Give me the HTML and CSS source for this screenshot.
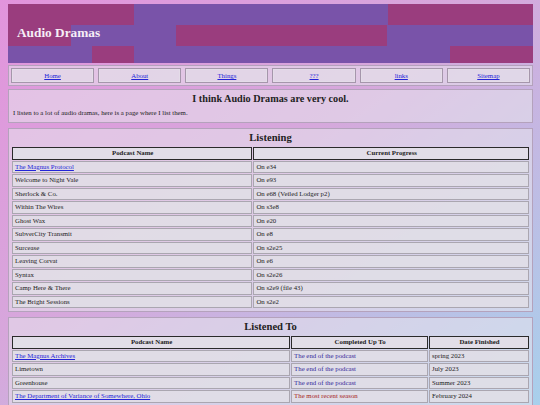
FILE: index.html
```html
<!DOCTYPE html>
<html lang="en">
  <head>
    <meta charset="UTF-8" />
    <meta name="viewport" content="width=device-width, initial-scale=1.0" />
    <title>Audio Dramas</title>
    <link rel="stylesheet" href="styles.css">
  </head>
  <body>
    <header class="banner">
      <h1>Audio Dramas</h1>
    </header>

    <nav class="nav panel">
      <a href="#">Home</a>
      <a href="#">About</a>
      <a href="#">Things</a>
      <a href="#">???</a>
      <a href="#">links</a>
      <a href="#">Sitemap</a>
    </nav>

    <section class="panel intro">
      <h2>I think Audio Dramas are very cool.</h2>
      <p>I listen to a lot of audio dramas, here is a page where I list them.</p>
    </section>

    <section class="panel list">
      <h3>Listening</h3>
      <table class="listening">
        <tr><th class="col-name">Podcast Name</th><th>Current Progress</th></tr>
        <tr><td><a href="#">The Magnus Protocol</a></td><td>On e34</td></tr>
        <tr><td>Welcome to Night Vale</td><td>On e93</td></tr>
        <tr><td>Sherlock &amp; Co.</td><td>On e68 (Veiled Lodger p2)</td></tr>
        <tr><td>Within The Wires</td><td>On s3e8</td></tr>
        <tr><td>Ghost Wax</td><td>On e20</td></tr>
        <tr><td>SubverCity Transmit</td><td>On e8</td></tr>
        <tr><td>Surcease</td><td>On s2e25</td></tr>
        <tr><td>Leaving Corvat</td><td>On e6</td></tr>
        <tr><td>Syntax</td><td>On s2e26</td></tr>
        <tr><td>Camp Here &amp; There</td><td>On s2e9 (file 43)</td></tr>
        <tr><td>The Bright Sessions</td><td>On s2e2</td></tr>
      </table>
    </section>

    <section class="panel list">
      <h3>Listened To</h3>
      <table class="listened">
        <tr><th class="col-name">Podcast Name</th><th class="col-done">Completed Up To</th><th>Date Finished</th></tr>
        <tr><td><a href="#">The Magnus Archives</a></td><td class="done">The end of the podcast</td><td>spring 2023</td></tr>
        <tr><td>Limetown</td><td class="done">The end of the podcast</td><td>July 2023</td></tr>
        <tr><td>Greenhouse</td><td class="done">The end of the podcast</td><td>Summer 2023</td></tr>
        <tr><td><a href="#">The Department of Variance of Somewhere, Ohio</a></td><td class="recent">The most recent season</td><td>February 2024</td></tr>
      </table>
    </section>
  </body>
</html>
```
FILE: styles.css
```css
* {
  box-sizing: border-box;
}

html {
  min-height: 100%;
}

body {
  margin: 4px 7px 0 8px;
  font-family: "Liberation Serif", "Times New Roman", serif;
  font-size: 6.8px;
  color: #222;
  background: linear-gradient(to bottom right, #e294dc 0%, #d6a8dc 45%, #a8d0ec 100%);
  background-attachment: fixed;
}

a {
  color: #2424d8;
}

/* banner with the blocky stripes */
.banner {
  height: 59px;
  display: flex;
  align-items: center;
  padding-left: 9px;
  padding-bottom: 1px;
  background:
    linear-gradient(to right, #9a3d7e 0 126px, #7953a9 126px 380px, #9a3d7e 380px) top / 100% 21px no-repeat,
    linear-gradient(to right, #9a3d7e 0 63px, #7953a9 63px 168px, #9a3d7e 168px 379px, #7953a9 379px) 0 21px / 100% 21px no-repeat,
    linear-gradient(to right, #7953a9 0 84px, #9a3d7e 84px 126px, #7953a9 126px 442px, #9a3d7e 442px) bottom / 100% 17px no-repeat;
}

.banner h1 {
  margin: 0;
  color: #f6eef6;
  font-size: 13.3px;
  font-weight: bold;
}

.panel {
  border: 1px solid #b4a2bc;
  background-color: rgba(232, 228, 236, 0.55);
}

.nav {
  margin-top: 2px;
  padding: 2px 2px;
  display: grid;
  grid-template-columns: repeat(6, 1fr);
  gap: 4px;
}

.nav a {
  height: 15px;
  display: flex;
  justify-content: center;
  align-items: center;
  border: 1px solid #a596ab;
  box-shadow: inset 0 0 0 1px #e4dce8;
  background-color: rgba(226, 220, 232, 0.7);
}

.intro {
  margin-top: 3px;
  padding: 3px 4px 5px;
}

.intro h2 {
  margin: 0;
  text-align: center;
  font-size: 10.2px;
  line-height: 12px;
}

.intro p {
  margin: 4px 0 0;
  line-height: 8px;
}

.list {
  margin-top: 5px;
  padding: 2px 2px 2px;
}

.list h3 {
  margin: 0 0 1px;
  text-align: center;
  font-size: 10.6px;
  line-height: 14px;
}

table {
  width: 100%;
  border-spacing: 1px;
}

th, td {
  padding: 1px 1px 1px 2px;
  line-height: 8.5px;
  text-align: left;
}

th {
  border: 1px solid #2a2a2a;
  text-align: center;
  background-color: #e2dee8;
}

td {
  border: 1px solid #aaa6b0;
  background-color: rgba(224, 222, 230, 0.88);
}

.listening .col-name {
  width: 46.6%;
}

.listened .col-name {
  width: 54%;
}

.listened .col-done {
  width: 26.6%;
}

.done {
  color: #35289a;
}

.recent {
  color: #a52222;
}
```
